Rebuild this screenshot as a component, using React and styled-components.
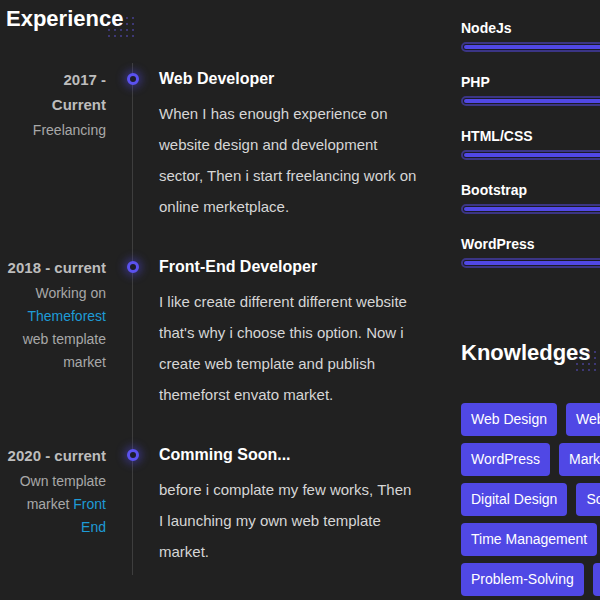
import styled, { createGlobalStyle } from "styled-components";

const experience = [
  {
    date: "2017 - Current",
    desc: [{ text: "Freelancing" }],
    title: "Web Developer",
    body: "When I has enough experience on website design and development sector, Then i start freelancing work on online merketplace.",
  },
  {
    date: "2018 - current",
    desc: [
      { text: "Working on " },
      { text: "Themeforest", link: true },
      { text: " web template market" },
    ],
    title: "Front-End Developer",
    body: "I like create different different website that's why i choose this option. Now i create web template and publish themeforst envato market.",
  },
  {
    date: "2020 - current",
    desc: [{ text: "Own template market " }, { text: "Front End", link: true }],
    title: "Comming Soon...",
    body: "before i complate my few works, Then I launching my own web template market.",
  },
];

const skills = ["NodeJs", "PHP", "HTML/CSS", "Bootstrap", "WordPress"];

const knowledges = [
  "Web Design",
  "Web Development",
  "WordPress",
  "Marketing",
  "Digital Design",
  "Social Media",
  "Time Management",
  "Communication",
  "Problem-Solving",
  "Teamwork",
];

const App = () => {
  return (
    <>
      <GlobalStyle />
      <Page>
        <LeftColumn>
          <Heading>Experience</Heading>
          <Timeline>
            {experience.map((item) => (
              <Row key={item.title}>
                <DateCol>
                  <DateText>{item.date}</DateText>
                  <DateDesc>
                    {item.desc.map((part, i) =>
                      part.link ? (
                        <Link key={i}>{part.text}</Link>
                      ) : (
                        <span key={i}>{part.text}</span>
                      )
                    )}
                  </DateDesc>
                </DateCol>
                <MarkerCol>
                  <Dot />
                </MarkerCol>
                <div>
                  <Title>{item.title}</Title>
                  <Body>{item.body}</Body>
                </div>
              </Row>
            ))}
          </Timeline>
        </LeftColumn>
        <RightColumn>
          <Skills>
            {skills.map((skill) => (
              <div key={skill}>
                <SkillName>{skill}</SkillName>
                <Track>
                  <Fill />
                </Track>
              </div>
            ))}
          </Skills>
          <Heading>Knowledges</Heading>
          <Tags>
            {knowledges.map((tag) => (
              <Tag key={tag}>{tag}</Tag>
            ))}
          </Tags>
        </RightColumn>
      </Page>
    </>
  );
};

export default App;

const GlobalStyle = createGlobalStyle`
  html, body {
    margin: 0;
    background: #212121;
    overflow: hidden;
  }
  body {
    font-family: "Liberation Sans", Arial, sans-serif;
    color: #fff;
  }
`;

const Page = styled.div`
  display: flex;
  gap: 42px;
  width: 900px;
  padding-left: 6px;
  height: 600px;
`;

const LeftColumn = styled.div`
  width: 413px;
  flex-shrink: 0;
  padding-top: 4px;
`;

const RightColumn = styled.div`
  width: 320px;
  padding-top: 19px;
`;

const Heading = styled.h2`
  position: relative;
  isolation: isolate;
  display: inline-block;
  margin: 0;
  font-size: 22px;
  line-height: 29px;
  font-weight: 700;
  color: #fff;

  /* dotted decoration behind the end of the heading */
  &::after {
    content: "";
    position: absolute;
    right: -13px;
    bottom: -6px;
    width: 30px;
    height: 24px;
    background-image: radial-gradient(
      circle,
      rgba(90, 80, 200, 0.5) 1px,
      transparent 1.3px
    );
    background-size: 6px 6px;
    z-index: -1;
  }
`;

const Timeline = styled.div`
  position: relative;
  margin-top: 30px;
  padding: 4px 0 8px;
  display: flex;
  flex-direction: column;
  gap: 33px;

  &::before {
    content: "";
    position: absolute;
    top: 0;
    bottom: 0;
    left: 126px;
    width: 1px;
    background: #3e3e3e;
  }
`;

const Row = styled.div`
  display: grid;
  grid-template-columns: 100px 53px 260px;
`;

const DateCol = styled.div`
  box-sizing: border-box;
  padding-left: 1px;
  text-align: right;
`;

const DateText = styled.div`
  font-size: 15px;
  line-height: 25px;
  font-weight: 700;
  color: #bdbdbd;
`;

const DateDesc = styled.div`
  margin-top: 2px;
  font-size: 14px;
  line-height: 23px;
  color: #a8a8a8;
`;

const Link = styled.span`
  color: #1e9bd6;
`;

const MarkerCol = styled.div`
  display: flex;
  justify-content: center;
  align-items: flex-start;
  position: relative;
  z-index: 1;
`;

const Dot = styled.span`
  box-sizing: border-box;
  margin-top: 6px;
  width: 12px;
  height: 12px;
  border-radius: 50%;
  border: 3px solid #5b52f0;
  background: #1d1d2c;
  box-shadow: 0 0 8px 3px rgba(80, 70, 220, 0.45);
`;

const Title = styled.h3`
  margin: 0 0 7px;
  font-size: 16px;
  line-height: 24px;
  font-weight: 700;
  color: #fff;
`;

const Body = styled.p`
  margin: 0;
  font-size: 15px;
  line-height: 31px;
  color: #d6d6d6;
`;

const Skills = styled.div`
  display: flex;
  flex-direction: column;
  gap: 21px;
  margin-bottom: 70px;
`;

const SkillName = styled.div`
  font-size: 14px;
  line-height: 18px;
  font-weight: 700;
  color: #fff;
`;

const Track = styled.div`
  box-sizing: border-box;
  margin-top: 5px;
  height: 10px;
  padding: 1px;
  border: 2px solid #3b3585;
  border-radius: 6px;
  background: #1b1b26;
`;

const Fill = styled.div`
  height: 100%;
  width: 100%;
  border-radius: 4px;
  background: #5148e6;
`;

const Tags = styled.div`
  display: flex;
  flex-wrap: wrap;
  gap: 7px 9px;
  width: 285px;
  margin-top: 36px;
`;

const Tag = styled.span`
  height: 33px;
  line-height: 33px;
  padding: 0 10px;
  border-radius: 4px;
  background: #5048e5;
  color: #fff;
  font-size: 14px;
  white-space: nowrap;
`;
